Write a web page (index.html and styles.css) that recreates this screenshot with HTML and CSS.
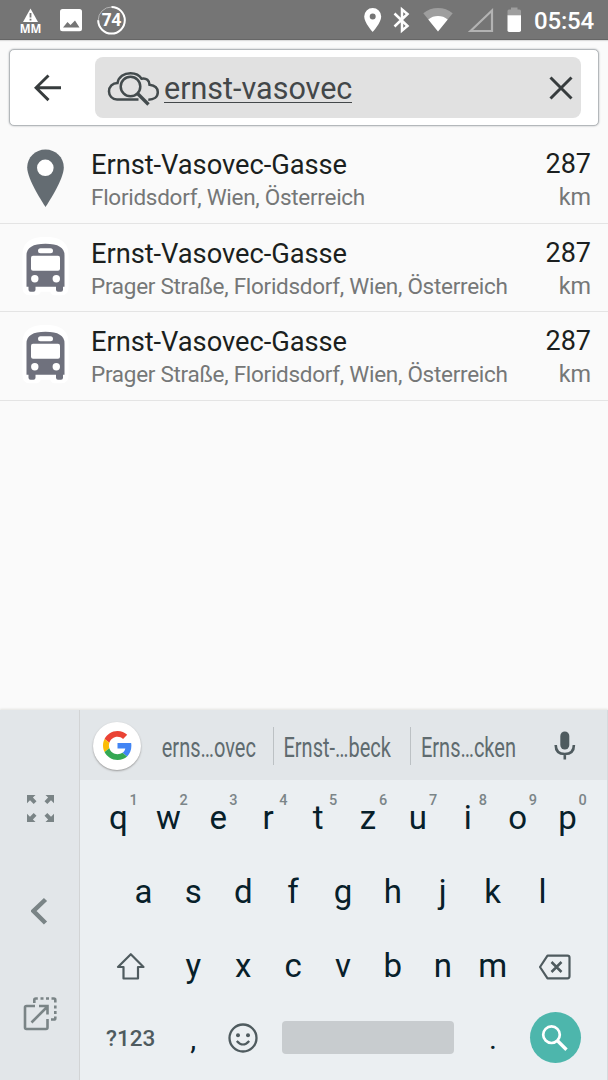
FILE: index.html
```html
<!DOCTYPE html>
<html lang="de">
<head>
    <meta charset="UTF-8">
    <meta name="viewport" content="width=device-width, initial-scale=1.0">
    <title>Suche</title>
    <link rel="stylesheet" href="styles.css">
</head>

<body>
    <div class="statusbar">
        <svg class="st-warn" width="24" height="40" viewBox="19 0 24 40">
            <path d="M30.5 8.5L38 22H23z" fill="#fff"/>
            <path d="M30.5 13v4.500M30.500 18.700v1.800" stroke="#757575" stroke-width="1.800"/>
            <text x="30.600" y="33" class="st-mm">MM</text>
        </svg>
        <svg class="st-image" width="22" height="40" viewBox="60 0 22 40">
            <rect x="60" y="9" width="22" height="22.300" rx="2.500" fill="#fff"/>
            <path d="M63 27.500l4.500-5.500 3 3 4.500-4.500 4.500 7z" fill="#757575"/>
        </svg>
        <svg class="st-ring" width="30" height="40" viewBox="96 0 30 40">
            <circle cx="111.500" cy="20.300" r="13.300" fill="none" stroke="#b5b5b5" stroke-width="1"/>
            <path d="M111.500 7a13.300 13.300 0 1 1-13.300 13.300" fill="none" stroke="#fff" stroke-width="2"/>
            <text x="111.500" y="26.300" class="st-num">74</text>
        </svg>
        <div class="st-right">
            <svg width="18" height="40" viewBox="364 0 18 40">
                <path fill="#fff" fill-rule="evenodd" d="M372.700 8a8.500 8.500 0 0 0-8.500 8.500c0 6.300 8.500 15.500 8.500 15.500s8.500-9.200 8.500-15.500a8.500 8.500 0 0 0-8.500-8.500zm0 5.500a3 3 0 1 1 0 6 3 3 0 0 1 0-6z"/>
            </svg>
            <svg class="st-bt" width="17" height="40" viewBox="393 0 17 40">
                <path d="M394.500 13.500l13 12.500-5.500 4.500v-21l5.500 4.500-13 12.500" fill="none" stroke="#fff" stroke-width="2.500"/>
            </svg>
            <svg class="st-wifi" width="30" height="40" viewBox="423 0 30 40">
                <path d="M438 31.500L423.300 13.200a23.500 23.500 0 0 1 29.400 0z" fill="#9e9e9e"/>
                <path d="M438 31.500L428.300 19.500a15.500 15.500 0 0 1 19.400 0z" fill="#fff"/>
            </svg>
            <svg class="st-signal" width="26" height="40" viewBox="468 0 26 40">
                <path d="M470.500 31L492 10.500V31z" fill="none" stroke="#b3b3b3" stroke-width="2.200"/>
            </svg>
            <svg class="st-battery" width="15" height="40" viewBox="507 0 15 40">
                <path d="M507.500 15.500V11q0-1.500 1.500-1.500h2V7.500h6.500v2h2q1.500 0 1.500 1.500v4.500z" fill="#9e9e9e"/>
                <path d="M507.500 15.300h13.500v15q0 1.700-1.700 1.700h-10.200q-1.600 0-1.600-1.700z" fill="#fff"/>
            </svg>
            <span class="clock">05:54</span>
        </div>
    </div>

    <div class="searchbar">
        <svg class="back" width="28" height="28" viewBox="34 74 28 28">
            <path d="M61 87.800H36M48.500 75.500L36 87.800l12.500 12.300" fill="none" stroke="#373c3d" stroke-width="2.900"/>
        </svg>
        <div class="field">
            <svg class="cloud" width="54" height="38" viewBox="106 67 54 38">
                <g fill="none" stroke="#434b4d" stroke-width="2.500">
                    <path d="M138.500 97.500H117c-5 0-8-4-8-8 0-5 3.500-8.500 8.500-8.500 1-6 6.500-9.800 13-9.800 5 0 9 2 11 5.500 5-1 8 2 8 6 5 .5 8.300 3 8.300 7.500 0 5-4 7.500-9.500 7.500"/>
                    <circle cx="130.500" cy="84.500" r="9.800"/>
                    <path d="M137.500 91.500l11 11" stroke-width="3.400"/>
                </g>
            </svg>
            <span class="query">ernst-vasovec</span>
            <svg class="clear" width="24" height="24" viewBox="0 0 24 24">
                <path d="M1.500 1.500l21 21M22.500 1.500l-21 21" stroke="#373c3d" stroke-width="3"/>
            </svg>
        </div>
    </div>

    <div class="results">
        <div class="row">
            <svg class="row-icon" width="50" height="60" viewBox="20 0 50 60">
                <path fill="#646c72" d="M45.500 1.500c-10.200 0-18.300 7.800-18.300 18C27.200 32 45.500 59 45.500 59s18.300-27 18.300-39.500c0-10.200-8.100-18-18.300-18z"/>
                <circle cx="45.300" cy="19.800" r="8.300" fill="#fff"/>
            </svg>
            <div class="place">
                <div class="name">Ernst-Vasovec-Gasse</div>
                <div class="address">Floridsdorf, Wien, Österreich</div>
            </div>
            <div class="distance"><div class="value">287</div><div class="unit">km</div></div>
        </div>
        <div class="row">
            <svg class="row-icon" width="50" height="60" viewBox="20 1.200 50 60">
                <use href="#bus"/>
            </svg>
            <div class="place">
                <div class="name">Ernst-Vasovec-Gasse</div>
                <div class="address">Prager Straße, Floridsdorf, Wien, Österreich</div>
            </div>
            <div class="distance"><div class="value">287</div><div class="unit">km</div></div>
        </div>
        <div class="row">
            <svg class="row-icon" width="50" height="60" viewBox="20 1.200 50 60">
                <defs>
                    <g id="bus">
                        <path d="M26.500 52V19q0-14 19-14t19 14v33q0 3.500-3 3.500h-7l-2-3.500H38.500l-2 3.500h-7q-3 0-3-3.500z" fill="#fff" stroke="#fff" stroke-width="8" stroke-linejoin="round"/>
                        <path d="M26.500 51V19.500q0-11.500 19-11.500t19 11.500V51h-1.500v3q0 2-2 2h-3q-2 0-2-2v-3H35.500v3q0 2-2 2h-3q-2 0-2-2v-3z" fill="#6f717d"/>
                        <rect x="38" y="12.500" width="15" height="5" rx="2.500" fill="#fff"/>
                        <rect x="31" y="20" width="29" height="15" rx="2" fill="#fff"/>
                        <circle cx="34.800" cy="43" r="3.700" fill="#fff"/>
                        <circle cx="56.300" cy="43" r="3.700" fill="#fff"/>
                    </g>
                </defs>
                <use href="#bus"/>
            </svg>
            <div class="place">
                <div class="name">Ernst-Vasovec-Gasse</div>
                <div class="address">Prager Straße, Floridsdorf, Wien, Österreich</div>
            </div>
            <div class="distance"><div class="value">287</div><div class="unit">km</div></div>
        </div>
    </div>

    <div class="keyboard">
        <div class="side">
            <svg width="28" height="28" viewBox="26 794 28 28">
                <g fill="#7a8486">
                    <path id="corner" d="M27 795h8.500l-2.600 2.600 3.600 3.600-2.800 2.800-3.700-3.700-3 3z"/>
                    <use href="#corner" transform="matrix(-1 0 0 1 81 0)"/>
                    <use href="#corner" transform="matrix(1 0 0 -1 0 1617)"/>
                    <use href="#corner" transform="matrix(-1 0 0 -1 81 1617)"/>
                </g>
            </svg>
            <svg class="side-left" width="18" height="28" viewBox="32 897 18 28">
                <path d="M46.500 899.500L34.500 911l12 12" fill="none" stroke="#7a8486" stroke-width="4.500"/>
            </svg>
            <svg class="side-float" width="36" height="36" viewBox="23 996 36 36">
                <g fill="none" stroke="#7a8486" stroke-width="2.600">
                    <path d="M36 1006H27.500q-1.500 0-1.500 1.500V1027.500q0 1.500 1.500 1.500H47q1.500 0 1.500-1.500V1019M32.500 1022.500L48 1007M40 1006h8.500v8.500"/>
                    <path d="M35.300 1003v-3q0-1.500 1.500-1.500h2M41.500 998.500h3M47 998.500h3M52.500 998.500h2.300q1.500 0 1.500 1.500v2.500M56.300 1005.500v3M56.300 1011v3M56.300 1016.500v1.700q0 1.300-1.500 1.300H52"/>
                </g>
            </svg>
        </div>

        <div class="main">
            <div class="suggestions">
                <div class="google">
                    <svg width="29" height="29" viewBox="0 0 48 48">
                        <path fill="#EA4335" d="M24 9.500c3.540 0 6.710 1.220 9.210 3.600l6.850-6.850C35.900 2.380 30.470 0 24 0 14.620 0 6.510 5.380 2.560 13.220l7.980 6.190C12.430 13.720 17.740 9.500 24 9.500z"/>
                        <path fill="#4285F4" d="M46.980 24.550c0-1.570-.15-3.090-.38-4.550H24v9.020h12.940c-.58 2.960-2.260 5.480-4.780 7.180l7.730 6c4.510-4.180 7.090-10.360 7.090-17.650z"/>
                        <path fill="#FBBC05" d="M10.530 28.590c-.48-1.450-.76-2.990-.76-4.590s.27-3.140.76-4.590l-7.980-6.190C.92 16.460 0 20.120 0 24c0 3.880.92 7.540 2.560 10.780l7.970-6.190z"/>
                        <path fill="#34A853" d="M24 48c6.480 0 11.930-2.130 15.890-5.810l-7.730-6c-2.150 1.450-4.920 2.300-8.160 2.300-6.260 0-11.570-4.220-13.470-9.910l-7.980 6.190C6.510 42.620 14.620 48 24 48z"/>
                    </svg>
                </div>
                <div class="suggest s1"><span>erns…ovec</span></div>
                <div class="suggest s2"><span>Ernst-…beck</span></div>
                <div class="suggest s3"><span>Erns…cken</span></div>
                <svg class="mic" width="22" height="30" viewBox="554 730.500 22 30">
                    <rect x="560.300" y="731" width="9" height="18" rx="4.500" fill="#4f5b5f"/>
                    <path d="M555.700 744.500q0 9 9.100 9t9.100-9M564.800 753v6" fill="none" stroke="#4f5b5f" stroke-width="2.600"/>
                </svg>
            </div>

            <div class="keys">
                <div class="krow">
                    <div class="key">q<sup>1</sup></div>
                    <div class="key">w<sup>2</sup></div>
                    <div class="key">e<sup>3</sup></div>
                    <div class="key">r<sup>4</sup></div>
                    <div class="key">t<sup>5</sup></div>
                    <div class="key">z<sup>6</sup></div>
                    <div class="key">u<sup>7</sup></div>
                    <div class="key">i<sup>8</sup></div>
                    <div class="key">o<sup>9</sup></div>
                    <div class="key">p<sup>0</sup></div>
                </div>
                <div class="krow">
                    <div class="key">a</div>
                    <div class="key">s</div>
                    <div class="key">d</div>
                    <div class="key">f</div>
                    <div class="key">g</div>
                    <div class="key">h</div>
                    <div class="key">j</div>
                    <div class="key">k</div>
                    <div class="key">l</div>
                </div>
                <div class="krow">
                    <div class="key wide">
                        <svg width="30" height="28" viewBox="116 952 30 28">
                            <path d="M130.800 954.200L143.500 967h-5.500v11.500h-14.500V967h-5.500z" fill="none" stroke="#4f5b5f" stroke-width="2.200" stroke-linejoin="round"/>
                        </svg>
                    </div>
                    <div class="key">y</div>
                    <div class="key">x</div>
                    <div class="key">c</div>
                    <div class="key">v</div>
                    <div class="key">b</div>
                    <div class="key">n</div>
                    <div class="key">m</div>
                    <div class="key wide">
                        <svg width="34" height="28" viewBox="539 952.500 34 28">
                            <path d="M548.500 956.200h20q2 0 2 2v18.600q0 2-2 2h-20l-7.500-11.300z" fill="none" stroke="#4f5b5f" stroke-width="2.200" stroke-linejoin="round"/>
                            <path d="M552.500 962.500l10 10M562.500 962.500l-10 10" stroke="#4f5b5f" stroke-width="2.500"/>
                        </svg>
                    </div>
                </div>
                <div class="krow bottom">
                    <div class="key wide symbols">?123</div>
                    <div class="key punct">,</div>
                    <div class="key">
                        <svg width="30" height="30" viewBox="0 0 30 30">
                            <circle cx="15" cy="15" r="13.500" fill="none" stroke="#4f5b5f" stroke-width="2.300"/>
                            <circle cx="10" cy="12.300" r="2" fill="#4f5b5f"/>
                            <circle cx="20" cy="12.300" r="2" fill="#4f5b5f"/>
                            <path d="M8.800 18q6.200 7 12.400 0" fill="none" stroke="#4f5b5f" stroke-width="2.200"/>
                        </svg>
                    </div>
                    <div class="key space"><span></span></div>
                    <div class="key punct">.</div>
                    <div class="key wide">
                        <div class="enter">
                            <svg width="28" height="28" viewBox="0 0 28 28">
                                <circle cx="10.500" cy="10.700" r="8.300" fill="none" stroke="#fff" stroke-width="2.700"/>
                                <path d="M16.500 16.700l9 9" stroke="#fff" stroke-width="3.400"/>
                            </svg>
                        </div>
                    </div>
                </div>
            </div>
        </div>
    </div>
</body>
</html>
```
FILE: styles.css
```css
* {
    box-sizing: border-box;
}

body {
    margin: 0;
    width: 608px;
    height: 1080px;
    overflow: hidden;
    display: flex;
    flex-direction: column;
    background-color: #fafafa;
    font-family: Roboto, "Liberation Sans", sans-serif;
}

svg {
    display: block;
    flex: none;
}

/* status bar */
.statusbar {
    display: flex;
    height: 40px;
    flex: none;
    padding: 0 14px 0 19px;
    background-color: #757575;
    box-shadow: inset 0 -1px 0 #666, 0 1px 1px #ddd;
}

.st-image {
    margin-left: 17px;
}

.st-ring {
    margin-left: 14px;
}

.st-mm {
    font: bold 11.5px "Open Sans", sans-serif;
    fill: #fff;
    text-anchor: middle;
}

.st-num {
    font: bold 17px "Open Sans", sans-serif;
    fill: #fff;
    text-anchor: middle;
}

.st-right {
    display: flex;
    margin-left: auto;
}

.st-bt {
    margin-left: 11px;
}

.st-wifi {
    margin-left: 13px;
}

.st-signal {
    margin-left: 15px;
}

.st-battery {
    margin-left: 13px;
}

.clock {
    width: 60px;
    margin-left: 12px;
    color: #fff;
    font-size: 24px;
    font-weight: 500;
    line-height: 43px;
    letter-spacing: -0.2px;
    white-space: nowrap;
}

/* search */
.searchbar {
    display: flex;
    align-items: center;
    flex: none;
    height: 77px;
    margin: 9px 9px 0;
    padding: 0 16px 0 24px;
    background-color: #fff;
    border: 1px solid #b4b8bb;
    border-radius: 5px;
    box-shadow: 0 0 2px #aaaeb1;
}

.field {
    display: flex;
    align-items: center;
    width: 486px;
    height: 61px;
    margin-left: 33px;
    padding: 0 8px 0 11px;
    background-color: #e1e1e1;
    border-radius: 8px;
}

.query {
    margin-left: 4px;
    margin-top: 4px;
    font-size: 30.5px;
    line-height: 26px;
    color: #434749;
    border-bottom: 1px solid #434749;
}

.clear {
    margin-left: auto;
}

/* results */
.results {
    flex: 1;
    padding-top: 9px;
}

.row {
    display: flex;
    height: 88.6px;
    padding: 14px 17px 0 20px;
    border-bottom: 1px solid #e4e4e4;
}

.row-icon {
    margin-top: -1px;
}

.place {
    flex: 1;
    margin-left: 21px;
    white-space: nowrap;
}

.name {
    font-size: 27.3px;
    line-height: 32px;
    letter-spacing: -0.05px;
    color: #1b1f20;
}

.address {
    margin-top: 3px;
    font-size: 22.5px;
    line-height: 27px;
    letter-spacing: -0.28px;
    color: #757777;
}

.distance {
    text-align: right;
}

.value {
    font-size: 27px;
    line-height: 31px;
    color: #1b1f20;
}

.unit {
    margin-top: 4px;
    font-size: 23.4px;
    line-height: 27px;
    color: #757777;
}

/* keyboard */
.keyboard {
    display: flex;
    flex: none;
    height: 370px;
    background-color: #e2e6e9;
    box-shadow: 0 -1px 2px #e3e3e0;
}

.side {
    display: flex;
    flex-direction: column;
    align-items: center;
    width: 80px;
    padding-top: 84px;
    padding-left: 1px;
    border-right: 1px solid #d2d4d5;
}

.side-left {
    margin-top: 75px;
}

.side-float {
    margin-top: 71px;
}

.main {
    flex: 1;
    border-right: 1px solid #d6dadd;
}

.suggestions {
    display: flex;
    align-items: center;
    height: 70px;
    padding-left: 13px;
    padding-top: 1px;
}

.google {
    display: flex;
    align-items: center;
    justify-content: center;
    width: 48px;
    height: 48px;
    border-radius: 50%;
    background-color: #fff;
    box-shadow: 0 1px 2px #999;
}

.suggest {
    display: flex;
    align-items: center;
    justify-content: center;
    height: 38px;
    padding-top: 4px;
    font-size: 28px;
    color: #5f6b6f;
}

.suggest span {
    transform: scaleX(0.715);
    white-space: nowrap;
}

.s1 {
    width: 133px;
    padding-left: 4px;
    border-right: 1px solid #bcc1c4;
}

.s2 {
    width: 137px;
    padding-right: 9px;
    border-right: 1px solid #bcc1c4;
}

.s3 {
    width: 116px;
    padding-right: 2px;
}

.mic {
    margin-left: 27px;
}

.keys {
    height: 300px;
    padding-top: 1px;
    padding-left: 13px;
    padding-right: 14px;
    background-color: #ebeff2;
}

.krow {
    display: flex;
    justify-content: center;
    height: 73.9px;
}

.bottom {
    height: 70px;
}

.key {
    position: relative;
    display: flex;
    align-items: center;
    justify-content: center;
    width: 49.9px;
    flex: none;
    font-size: 33px;
    color: #07202a;
}

.key sup {
    position: absolute;
    left: 36px;
    top: 12px;
    font-size: 14.5px;
    font-weight: 500;
    line-height: 15px;
    color: #7b8588;
}

.wide {
    width: 75px;
}

.symbols {
    padding-top: 1px;
    font-size: 22.5px;
    font-weight: 500;
    color: #4f5b5f;
}

.punct {
    font-size: 30px;
    padding-top: 2px;
}

.space {
    width: 200px;
}

.space span {
    width: 172px;
    height: 33px;
    border-radius: 4px;
    background-color: #c8cccf;
}

.enter {
    display: flex;
    align-items: center;
    justify-content: center;
    width: 51px;
    height: 51px;
    border-radius: 50%;
    background-color: #4db6ac;
}
```
